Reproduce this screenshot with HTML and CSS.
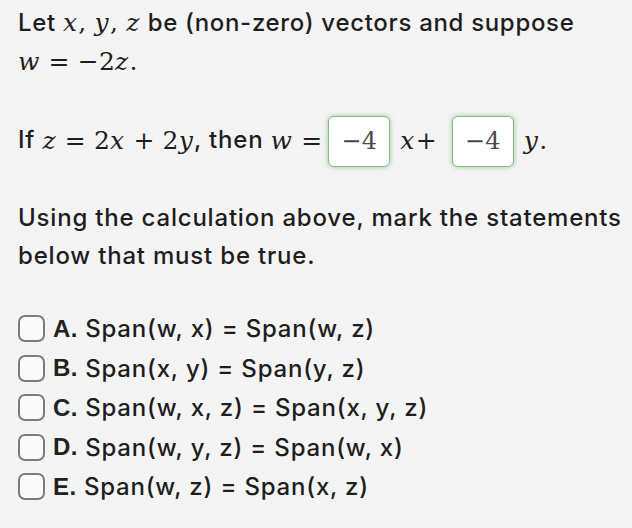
FILE: index.html
```html
<!DOCTYPE html>
<html lang="en">
<head>
<meta charset="utf-8">
<title>Span question</title>
<link rel="stylesheet" href="styles.css">
</head>
<body>
<main class="question">
  <p class="intro">Let <span class="m"><i>x</i>, <i>y</i>, <i>z</i></span> be (non-zero) vectors and suppose<br><span class="m line2"><i>w</i><span class="op">=</span>−2<i>z</i>.</span></p>
  <p class="calc">If <span class="m"><i>z</i><span class="op">=</span>2<i>x</i><span class="op">+</span>2<i>y</i></span>, then <span class="m"><i>w</i><span class="op op-tight">=</span></span><span class="box">−4</span><span class="m xplus"><i>x</i>+</span><span class="box">−4</span><span class="m"><i>y</i>.</span></p>
  <p class="prompt">Using the calculation above, mark the statements below that must be true.</p>
  <ul class="options">
    <li class="opt"><span class="cb"></span><b class="lbl">A.</b> Span(w, x) = Span(w, z)</li>
    <li class="opt"><span class="cb"></span><b class="lbl">B.</b> Span(x, y) = Span(y, z)</li>
    <li class="opt"><span class="cb"></span><b class="lbl">C.</b> Span(w, x, z) = Span(x, y, z)</li>
    <li class="opt"><span class="cb"></span><b class="lbl">D.</b> Span(w, y, z) = Span(w, x)</li>
    <li class="opt"><span class="cb"></span><b class="lbl">E.</b> Span(w, z) = Span(x, z)</li>
  </ul>
</main>
</body>
</html>
```

FILE: styles.css
```css
html, body {
  margin: 0;
  padding: 0;
  background: #f4f4f4;
}
body {
  font-family: Inter, "Noto Sans", sans-serif;
  color: #1e1e1e;
  font-size: 24px;
  letter-spacing: 0.8px;
}
.question {
  padding: 5px 0 0 18px;
}
.intro {
  margin: 0;
  font-weight: 500;
  line-height: 36px;
  letter-spacing: 0.68px;
}
.m {
  font-family: "DejaVu Serif", "Liberation Serif", serif;
  font-size: 25px;
  font-weight: 400;
  letter-spacing: 0.2px;
}
.m i {
  font-style: italic;
  padding-right: 1px;
}
.line2 {
  vertical-align: -3px;
}
.op {
  margin: 0 8px;
}
.op-tight {
  margin-right: 1px;
}
.calc {
  margin: 34px 0 0;
  height: 52px;
  line-height: 52px;
  font-weight: 500;
  white-space: nowrap;
}
.calc > * {
  vertical-align: middle;
}
.box {
  display: inline-block;
  box-sizing: border-box;
  width: 62px;
  height: 51px;
  line-height: 49px;
  margin: 0 10px 0 5px;
  text-align: center;
  background: #fff;
  border: 1.5px solid #82bc82;
  border-radius: 6px;
  box-shadow: 0 0 5px rgba(100, 180, 100, 0.65);
  font-family: "DejaVu Serif", "Liberation Serif", serif;
  font-size: 24px;
  font-weight: 400;
  letter-spacing: 0.5px;
  color: #4a4a4a;
}
.xplus {
  margin-right: 10px;
}
.prompt {
  margin: 33px 0 0;
  font-weight: 500;
  line-height: 38px;
}
.options {
  list-style: none;
  margin: 34px 0 0;
  padding: 0;
}
.opt {
  display: flex;
  align-items: center;
  height: 39.5px;
  white-space: pre;
  font-weight: 450;
}
.cb {
  box-sizing: border-box;
  width: 27px;
  height: 27px;
  border: 2px solid #7c7c7c;
  border-radius: 7px;
  background: #fafafa;
  margin-right: 8px;
  flex: none;
}
.lbl {
  font-family: "Liberation Sans", Arial, sans-serif;
  font-weight: 700;
  letter-spacing: 0.5px;
  color: #222;
}
```
